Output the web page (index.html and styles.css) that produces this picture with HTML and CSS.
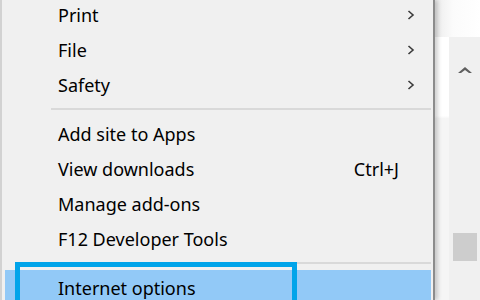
FILE: index.html
```html
<!DOCTYPE html>
<html lang="en">
<head>
    <meta charset="UTF-8">
    <title>Tools menu</title>
    <link rel="stylesheet" href="styles.css">
</head>
<body>
    <div class="menu">
        <div class="list">
            <div class="item"><span class="label">Print</span><svg class="chev" width="8" height="10" viewBox="0 0 8 10"><polyline points="1.5,1 6,5 1.5,9" /></svg></div>
            <div class="item"><span class="label">File</span><svg class="chev" width="8" height="10" viewBox="0 0 8 10"><polyline points="1.5,1 6,5 1.5,9" /></svg></div>
            <div class="item"><span class="label">Safety</span><svg class="chev" width="8" height="10" viewBox="0 0 8 10"><polyline points="1.5,1 6,5 1.5,9" /></svg></div>
            <div class="sep"></div>
            <div class="item"><span class="label">Add site to Apps</span></div>
            <div class="item"><span class="label">View downloads</span><span class="key">Ctrl+J</span></div>
            <div class="item"><span class="label">Manage add-ons</span></div>
            <div class="item"><span class="label">F12 Developer Tools</span></div>
            <div class="sep"></div>
            <div class="item active">
                <span class="label">Internet options</span>
                <div class="focus-box"></div>
            </div>
        </div>
    </div>

    <div class="side">
        <div class="side-top"></div>
        <div class="side-body">
            <div class="gap"></div>
            <div class="scrollbar">
                <svg class="up" width="16" height="8" viewBox="0 0 16 8"><polygon points="1,7 8,1 15,7 12,7 8,4 4,7" /></svg>
                <div class="thumb"></div>
            </div>
        </div>
    </div>
</body>
</html>
```

FILE: styles.css
```css
body {
    margin: 0;
    width: 480px;
    height: 300px;
    overflow: hidden;
    display: flex;
    background: #fff;
    font-family: "Noto Sans", "Open Sans", sans-serif;
    font-size: 18px;
    color: #000;
}

.menu {
    width: 431px;
    height: 300px;
    flex: none;
    overflow: hidden;
    background: #f0f0f0;
    border-left: 2px solid #d2d2d2;
    border-right: 2px solid #8c8c8c;
    box-shadow: 3px 0 4px rgba(0, 0, 0, 0.18);
    position: relative;
    z-index: 1;
}

.list {
    margin-top: -3px;
}

.item {
    height: 35px;
    margin: 0 2px 0 3px;
    padding: 0 16px 0 53px;
    display: flex;
    align-items: center;
    position: relative;
}

.label {
    flex: 1;
}

.key {
    margin-right: 16px;
}

.chev {
    fill: none;
    stroke: #3c3c3c;
    stroke-width: 1.6;
}

.sep {
    height: 14px;
    margin: 0 2px 0 49px;
    display: flex;
    align-items: center;
}

.sep::before {
    content: "";
    flex: 1;
    height: 2px;
    background: #d9d9d9;
}

.item.active {
    background: #92c9f7;
}

.focus-box {
    position: absolute;
    left: 10px;
    top: -8px;
    width: 272px;
    height: 40px;
    border: 5px solid #00a4ea;
    border-bottom: none;
}

.side {
    flex: 1;
    display: flex;
    flex-direction: column;
}

.side-top {
    height: 37px;
    background: linear-gradient(90deg, #ececec 0%, #fbfbfb 40%, #fff 100%);
}

.side-body {
    flex: 1;
    display: flex;
}

.gap {
    width: 14px;
    background: linear-gradient(180deg, #fff 0%, #fff 30%, #f5f5f5 31%, #f5f5f5 100%);
}

.scrollbar {
    flex: 1;
    background: #f0f0f0;
    display: flex;
    flex-direction: column;
    align-items: center;
}

.up {
    margin-top: 29px;
    fill: #5f5f5f;
}

.thumb {
    width: 24px;
    height: 28px;
    margin-top: 159px;
    background: #cdcdcd;
}
```
